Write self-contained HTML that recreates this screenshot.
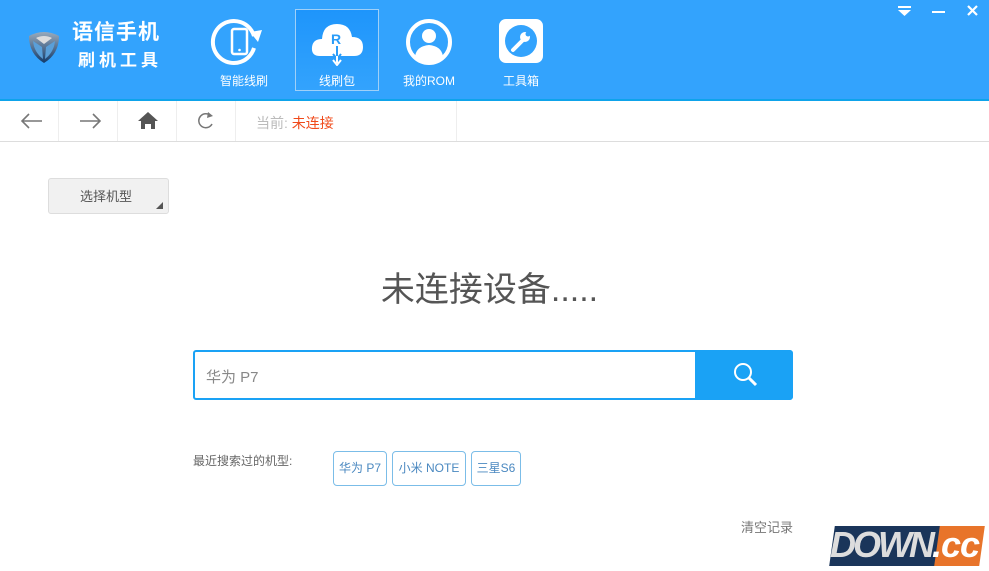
<!DOCTYPE html><html><head><meta charset="utf-8"><style>
*{margin:0;padding:0;box-sizing:border-box}
body{width:989px;height:571px;overflow:hidden;background:#fff;font-family:"Liberation Sans","Noto Sans CJK SC",sans-serif;position:relative}
.hd{position:absolute;left:0;top:0;width:989px;height:99px;background:#33a3fd}
.hl{position:absolute;left:0;top:99px;width:989px;height:2px;background:#0ea3ea}
.ab{position:absolute}
.lbl{position:absolute;color:#fff;font-size:12px;text-align:center;width:90px}
.nav{position:absolute;top:101px;left:0;width:989px;height:41px;border-bottom:1px solid #ddd}
.sep{position:absolute;top:101px;width:1px;height:40px;background:#eee}
.tag{position:absolute;top:451px;height:35px;border:1px solid #7bbde8;border-radius:4px;color:#4a88c0;font-size:12px;line-height:33px;text-align:center}
</style></head><body>
<div class="hd"></div><div class="hl"></div>
<svg class="ab" style="left:26px;top:28px" width="36" height="36" viewBox="0 0 36 36"><defs><linearGradient id="g" x1="0" y1="0" x2="0" y2="1"><stop offset="0" stop-color="#9ab"/><stop offset="1" stop-color="#123a6a"/></linearGradient></defs><path d="M3 8 Q18 0 33 8 Q33 26 18 35 Q3 26 3 8Z" fill="url(#g)"/><path d="M10 10 Q18 6 26 10 L18 16Z" fill="#ddd"/><path d="M7 13 L16 19 L17 31 Q8 24 7 13Z M29 13 L20 19 L19 31 Q28 24 29 13Z" fill="#5a9fd8"/></svg>
<div class="ab" style="left:72px;top:16px;color:#fff;font-weight:bold;font-size:21px;letter-spacing:1px">语信手机</div>
<div class="ab" style="left:78px;top:46px;color:#fff;font-weight:bold;font-size:17px;letter-spacing:4px">刷机工具</div>
<svg class="ab" style="left:208px;top:18px" width="62" height="48" viewBox="0 0 62 48"><path d="M46 18 A21 21 0 1 0 46 30" fill="none" stroke="#fff" stroke-width="4"/><path d="M42 14 L54 12 L50 24Z" fill="#fff"/><rect x="24" y="11" width="15" height="25" rx="2" fill="none" stroke="#fff" stroke-width="2.5"/><circle cx="31.5" cy="32" r="1.3" fill="#fff"/></svg>
<div class="lbl" style="left:199px;top:72px">智能线刷</div>
<div class="ab" style="left:295px;top:9px;width:84px;height:82px;border:1px solid #9fd0f8;background:linear-gradient(#1e95fb,#33a3fd)"></div>
<svg class="ab" style="left:310px;top:18px" width="56" height="48" viewBox="0 0 56 48"><path d="M10 38 Q1 38 2 29 Q3 21 12 21 Q13 6 27 6 Q40 6 42 19 Q53 19 53 29 Q53 38 44 38Z" fill="#fff"/><text x="21" y="26" font-size="14" font-weight="bold" fill="#2a9cf8" font-family="Liberation Sans">R</text><path d="M27 28 V40 M23 36 L27 41 L31 36" stroke="#2a9cf8" stroke-width="2" fill="none"/><path d="M27 38 V45 M23 42 L27 47 L31 42" stroke="#fff" stroke-width="2" fill="none"/></svg>
<div class="lbl" style="left:292px;top:72px">线刷包</div>
<svg class="ab" style="left:404px;top:17px" width="50" height="50" viewBox="0 0 50 50"><circle cx="25" cy="25" r="21" fill="none" stroke="#fff" stroke-width="4"/><circle cx="25" cy="19" r="7" fill="#fff"/><path d="M11 39 Q13 29 25 28 Q37 29 39 39 Q32 45 25 45 Q18 45 11 39Z" fill="#fff"/></svg>
<div class="lbl" style="left:384px;top:72px">我的ROM</div>
<svg class="ab" style="left:499px;top:19px" width="44" height="44" viewBox="0 0 44 44"><rect width="44" height="44" rx="7" fill="#fff"/><circle cx="22" cy="22" r="16" fill="#33a3fd"/><path d="M14 31 L24 21" stroke="#fff" stroke-width="4" stroke-linecap="round"/><circle cx="26" cy="18" r="5" fill="#fff"/><circle cx="29" cy="15" r="2.5" fill="#33a3fd"/></svg>
<div class="lbl" style="left:476px;top:72px">工具箱</div>
<svg class="ab" style="left:897px;top:5px" width="84" height="12" viewBox="0 0 84 12"><rect x="1" y="1" width="13" height="2" fill="#fff"/><path d="M1 5 H14 L7.5 11Z" fill="#fff"/><rect x="35" y="6" width="13" height="2" fill="#fff"/><path d="M71 1 L80 10 M80 1 L71 10" stroke="#fff" stroke-width="2.2"/></svg>
<div class="nav"></div>
<div class="sep" style="left:58px"></div><div class="sep" style="left:117px"></div><div class="sep" style="left:176px"></div><div class="sep" style="left:235px"></div><div class="sep" style="left:456px"></div>
<svg class="ab" style="left:20px;top:111px" width="200" height="20" viewBox="0 0 200 20"><path d="M2 10 H22 M9 3 L2 10 L9 17" stroke="#777" stroke-width="1.6" fill="none"/><path d="M60 10 H80 M73 3 L80 10 L73 17" stroke="#777" stroke-width="1.6" fill="none"/><path d="M118 10 L128 1 L138 10 H135 V18 H131 V13 H125 V18 H121 V10Z" fill="#555"/><path d="M191 5 A7 7 0 1 0 192 13" fill="none" stroke="#777" stroke-width="1.5"/><path d="M188 1 L193 5 L187 7Z" fill="#777"/></svg>
<div class="ab" style="left:256px;top:113px;font-size:14px;color:#bbb">当前: <span style="color:#f04a1a">未连接</span></div>
<div class="ab" style="left:48px;top:178px;width:121px;height:36px;background:#f1f1f1;border:1px solid #ddd;border-radius:3px;font-size:13px;color:#555;line-height:36px;padding-left:31px">选择机型</div>
<div class="ab" style="left:156px;top:202px;width:0;height:0;border-left:7px solid transparent;border-bottom:7px solid #555"></div>
<div class="ab" style="left:0;width:989px;top:262px;text-align:center;font-size:34px;color:#555;padding-right:10px">未连接设备.....</div>
<div class="ab" style="left:193px;top:350px;width:600px;height:50px;border:2px solid #1aa2f5;border-radius:3px"></div>
<div class="ab" style="left:695px;top:350px;width:98px;height:50px;background:#1aa2f5;border-radius:0 4px 4px 0"></div>
<svg class="ab" style="left:732px;top:361px" width="28" height="28" viewBox="0 0 28 28"><circle cx="11" cy="11" r="8" fill="none" stroke="#fff" stroke-width="2"/><path d="M17 17 L24 24" stroke="#fff" stroke-width="3"/></svg>
<div class="ab" style="left:206px;top:366px;font-size:15px;color:#888">华为 P7</div>
<div class="ab" style="left:193px;top:452px;font-size:12px;color:#666">最近搜索过的机型:</div>
<div class="tag" style="left:333px;width:54px">华为 P7</div>
<div class="tag" style="left:392px;width:74px">小米 NOTE</div>
<div class="tag" style="left:471px;width:50px">三星S6</div>
<div class="ab" style="left:741px;top:517px;font-size:13px;color:#777">清空记录</div>
<div class="ab" style="left:832px;top:526px;width:110px;height:40px;background:#1a355a;transform:skewX(-8deg)"></div>
<div class="ab" style="left:937px;top:526px;width:45px;height:40px;background:#e8742a;transform:skewX(-8deg)"></div>
<div class="ab" style="left:830px;top:524px;font-size:36px;font-weight:bold;font-style:italic;color:#ddd;letter-spacing:-3px;white-space:nowrap">DOWN<span style="color:#fff;letter-spacing:-1px">.cc</span></div>
</body></html>
